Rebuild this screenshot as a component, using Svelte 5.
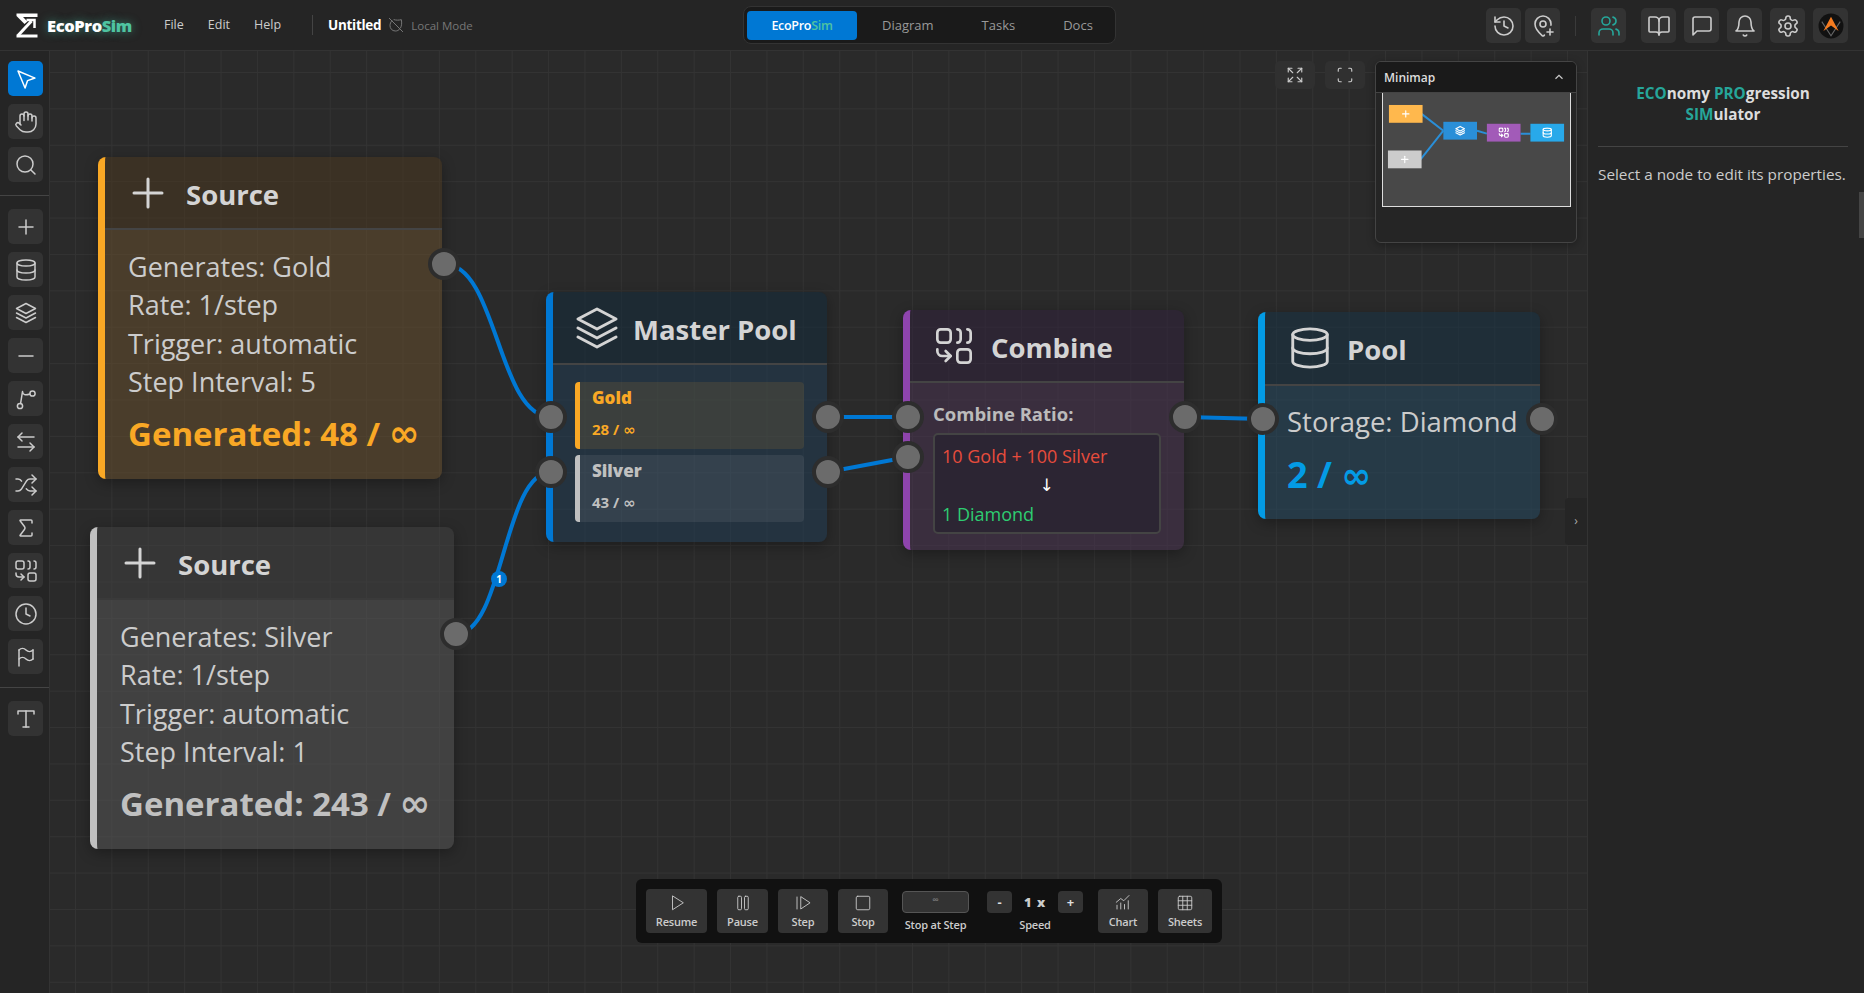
<script>
  // lucide-ish icon bodies, drawn on a 24 box
  const icons = {
    pointer: '<path d="m4 4 7.07 17 2.51-7.39L21 11.07z"/>',
    hand: '<path d="M18 11V6a2 2 0 0 0-4 0"/><path d="M14 10V4a2 2 0 0 0-4 0v2"/><path d="M10 10.5V6a2 2 0 0 0-4 0v8"/><path d="M18 8a2 2 0 1 1 4 0v6a8 8 0 0 1-8 8h-2c-2.8 0-4.5-.86-5.99-2.34l-3.6-3.6a2 2 0 0 1 2.83-2.82L7 15"/>',
    search: '<circle cx="11" cy="11" r="8"/><path d="m21 21-4.3-4.3"/>',
    plus: '<path d="M5 12h14"/><path d="M12 5v14"/>',
    database: '<ellipse cx="12" cy="5" rx="9" ry="3"/><path d="M3 5v14a9 3 0 0 0 18 0V5"/><path d="M3 12a9 3 0 0 0 18 0"/>',
    layers: '<path d="M12 2.5 2.5 7.5l9.5 5 9.5-5z"/><path d="m2.5 12 9.5 5 9.5-5"/><path d="m2.5 16.5 9.5 5 9.5-5"/>',
    minus: '<path d="M5 12h14"/>',
    branch: '<circle cx="6" cy="19" r="2.6"/><circle cx="18.5" cy="6.5" r="2.6"/><path d="M6.6 16.4 8.5 4.5q.5 5 7.4 2.5"/>',
    swap: '<path d="M8 3 4 7l4 4"/><path d="M4 7h16"/><path d="m16 21 4-4-4-4"/><path d="M20 17H4"/>',
    shuffle: '<path d="m18 14 4 4-4 4"/><path d="m18 2 4 4-4 4"/><path d="M2 18h1.973a4 4 0 0 0 3.3-1.7l5.454-8.6a4 4 0 0 1 3.3-1.7H22"/><path d="M2 6h1.972a4 4 0 0 1 3.6 2.2"/><path d="M22 18h-6.041a4 4 0 0 1-3.3-1.8l-.359-.45"/>',
    sigma: '<path d="M18 7V5a1 1 0 0 0-1-1H6.5a.5.5 0 0 0-.4.8l4.5 6a2 2 0 0 1 0 2.4l-4.5 6a.5.5 0 0 0 .4.8H17a1 1 0 0 0 1-1v-2"/>',
    combine: '<path d="M10 18H5a3 3 0 0 1-3-3v-1"/><path d="M14 2a2 2 0 0 1 2 2v4a2 2 0 0 1-2 2"/><path d="M20 2a2 2 0 0 1 2 2v4a2 2 0 0 1-2 2"/><path d="m7 21 3-3-3-3"/><rect x="14" y="14" width="8" height="8" rx="2"/><rect x="2" y="2" width="8" height="8" rx="2"/>',
    clock: '<circle cx="12" cy="12" r="10"/><path d="M12 6v6l4 2"/>',
    flag: '<path d="M5 5v16"/><path d="M19 5v9"/><path d="M5 5a5 5 0 0 1 7 0 5 5 0 0 0 7 0"/><path d="M5 14a5 5 0 0 1 7 0 5 5 0 0 0 7 0"/>',
    type: '<path d="M4 7V4h16v3"/><path d="M9 20h6"/><path d="M12 4v16"/>',
    history: '<path d="M3 12a9 9 0 1 0 9-9 9.75 9.75 0 0 0-6.74 2.74L3 8"/><path d="M3 3v5h5"/><path d="M12 7v5l4 2"/>',
    pinPlus: '<path d="M19.914 11.105A7.298 7.298 0 0 0 20 10a8 8 0 0 0-16 0c0 4.993 5.539 10.193 7.399 11.799a1 1 0 0 0 1.202 0 32 32 0 0 0 .824-.738"/><circle cx="12" cy="10" r="3"/><path d="M16 18h6"/><path d="M19 15v6"/>',
    users: '<path d="M16 21v-2a4 4 0 0 0-4-4H6a4 4 0 0 0-4 4v2"/><circle cx="9" cy="7" r="4"/><path d="M22 21v-2a4 4 0 0 0-3-3.87"/><path d="M16 3.13a4 4 0 0 1 0 7.75"/>',
    book: '<path d="M12 7v14"/><path d="M3 18a1 1 0 0 1-1-1V4a1 1 0 0 1 1-1h5a4 4 0 0 1 4 4 4 4 0 0 1 4-4h5a1 1 0 0 1 1 1v13a1 1 0 0 1-1 1h-6a3 3 0 0 0-3 3 3 3 0 0 0-3-3z"/>',
    message: '<path d="M21 15a2 2 0 0 1-2 2H7l-4 4V5a2 2 0 0 1 2-2h14a2 2 0 0 1 2 2z"/>',
    bell: '<path d="M6 8a6 6 0 0 1 12 0c0 7 3 9 3 9H3s3-2 3-9"/><path d="M10.3 21a1.94 1.94 0 0 0 3.4 0"/>',
    gear: '<path d="M12.22 2h-.44a2 2 0 0 0-2 2v.18a2 2 0 0 1-1 1.73l-.43.25a2 2 0 0 1-2 0l-.15-.08a2 2 0 0 0-2.73.73l-.22.38a2 2 0 0 0 .73 2.73l.15.1a2 2 0 0 1 1 1.72v.51a2 2 0 0 1-1 1.74l-.15.09a2 2 0 0 0-.73 2.73l.22.38a2 2 0 0 0 2.73.73l.15-.08a2 2 0 0 1 2 0l.43.25a2 2 0 0 1 1 1.73V20a2 2 0 0 0 2 2h.44a2 2 0 0 0 2-2v-.18a2 2 0 0 1 1-1.73l.43-.25a2 2 0 0 1 2 0l.15.08a2 2 0 0 0 2.73-.73l.22-.39a2 2 0 0 0-.73-2.73l-.15-.08a2 2 0 0 1-1-1.74v-.5a2 2 0 0 1 1-1.74l.15-.09a2 2 0 0 0 .73-2.73l-.22-.38a2 2 0 0 0-2.73-.73l-.15.08a2 2 0 0 1-2 0l-.43-.25a2 2 0 0 1-1-1.73V4a2 2 0 0 0-2-2z"/><circle cx="12" cy="12" r="3"/>',
    leafOff: '<path d="m2 2 20 20"/><path d="M5.8 5.8C4 7.5 3 10 3 13c0 4 3 8 8 8 3 0 5-1 6.5-3"/><path d="M9 4c3 1 7 1 11 0 1 5 .5 9-1 12"/>',
    expand: '<path d="m15 15 6 6"/><path d="m15 9 6-6"/><path d="M21 16v5h-5"/><path d="M21 8V3h-5"/><path d="M3 16v5h5"/><path d="m3 21 6-6"/><path d="M3 8V3h5"/><path d="M9 9 3 3"/>',
    full: '<path d="M3 7V5a2 2 0 0 1 2-2h2"/><path d="M17 3h2a2 2 0 0 1 2 2v2"/><path d="M21 17v2a2 2 0 0 1-2 2h-2"/><path d="M7 21H5a2 2 0 0 1-2-2v-2"/>',
    play: '<path d="M6 3v18l14-9z"/>',
    pause: '<rect x="5" y="3" width="5" height="18" rx="1.5"/><rect x="14" y="3" width="5" height="18" rx="1.5"/>',
    step: '<path d="M4 4v16"/><path d="M9 4v16l12-8z"/>',
    stop: '<rect x="3" y="3" width="18" height="18" rx="2"/>',
    chart: '<path d="M4 20v-5"/><path d="M9 20v-8"/><path d="M14 20v-6"/><path d="M19 20V9"/><path d="m3 11 6-5 4 3 7-7"/>',
    sheet: '<rect x="3" y="3" width="18" height="18" rx="2"/><path d="M3 9h18"/><path d="M3 15h18"/><path d="M9 3v18"/><path d="M15 3v18"/>'
  };

  const menus = ["File", "Edit", "Help"];
  const tabs = ["Diagram", "Tasks", "Docs"];
  const toolGroups = [
    [{ i: "pointer", on: true }, { i: "hand" }, { i: "search" }],
    [{ i: "plus" }, { i: "database" }, { i: "layers" }, { i: "minus" }, { i: "branch" }, { i: "swap" }, { i: "shuffle" }, { i: "sigma" }, { i: "combine" }, { i: "clock" }, { i: "flag" }],
    [{ i: "type" }]
  ];

  const sources = [
    { cls: "gold", x: 48, y: 106, w: 344, h: 322, res: "Gold", interval: 5, made: "48" },
    { cls: "silver", x: 40, y: 476, w: 364, h: 322, res: "Silver", interval: 1, made: "243" }
  ];

  const stock = [
    { name: "Gold", val: "28", cls: "gold" },
    { name: "Silver", val: "43", cls: "silver" }
  ];

  const runBtns = [
    { i: "play", t: "Resume", w: 61 },
    { i: "pause", t: "Pause", w: 51 },
    { i: "step", t: "Step", w: 50 },
    { i: "stop", t: "Stop", w: 50 }
  ];

  const mini = [
    { x: 6, y: 12, c: "#ffb84d", i: "plus" },
    { x: 61, y: 29, c: "#2a8fd8", i: "layers" },
    { x: 105, y: 31, c: "#a25bb8", i: "combine" },
    { x: 149, y: 31, c: "#28a9ea", i: "database" },
    { x: 5, y: 58, c: "#cccccc", i: "plus" }
  ];
</script>

{#snippet icon(name, size = 24, sw = 2)}
  <svg width={size} height={size} viewBox="0 0 24 24" fill="none" stroke="currentColor" stroke-width={sw} stroke-linecap="round" stroke-linejoin="round">{@html icons[name]}</svg>
{/snippet}

<div class="app">
  <header class="top">
    <div class="brand">
      <svg width="22" height="25" viewBox="0 0 22 25" fill="none">
        <path d="M0.5 0.5H21.5V4H7L11.5 8.5L8.5 11L0.5 3Z" fill="#fff"/>
        <path d="M2 22.5 15.5 8" stroke="#fff" stroke-width="3"/>
        <path d="M10.5 7H18.5V15" stroke="#fff" stroke-width="2.5"/>
        <path d="M0.5 24.5V21.5H21.5V24.5Z" fill="#fff"/>
      </svg>
      <span class="brand-name">EcoPro<em>Sim</em></span>
    </div>
    <nav class="menus">
      {#each menus as m}<span>{m}</span>{/each}
    </nav>
    <div class="doc">
      <b>Untitled</b>
      {@render icon("leafOff", 16, 1.5)}
      <span>Local Mode</span>
    </div>
    <div class="tabs">
      <span class="tab active">EcoPro<em>Sim</em></span>
      {#each tabs as t}<span class="tab">{t}</span>{/each}
    </div>
    <div class="actions">
      <button class="ic">{@render icon("history", 24, 1.6)}</button>
      <button class="ic">{@render icon("pinPlus", 24, 1.6)}</button>
      <i class="sep"></i>
      <button class="ic teal">{@render icon("users", 24, 1.6)}</button>
      <i class="sep-space"></i>
      <button class="ic">{@render icon("book", 24, 1.6)}</button>
      <button class="ic">{@render icon("message", 24, 1.6)}</button>
      <button class="ic">{@render icon("bell", 24, 1.6)}</button>
      <button class="ic">{@render icon("gear", 24, 1.6)}</button>
      <button class="ic">
        <svg width="26" height="26" viewBox="0 0 24 24">
          <circle cx="12" cy="12" r="11.5" fill="#111"/>
          <path d="M3.5 8 12 21 20.5 8" fill="none" stroke="#666" stroke-width="1"/>
          <path d="M12 3.5 19 16.5 12 11.5 5 16.5Z" fill="#f47b20"/>
        </svg>
      </button>
    </div>
  </header>

  <aside class="tools">
    {#each toolGroups as group}
      <div class="tool-group">
        {#each group as t}
          <button class="ic" class:on={t.on}>{@render icon(t.i, 24, 1.5)}</button>
        {/each}
      </div>
    {/each}
  </aside>

  <main class="canvas">
    <svg class="edges" width="1537" height="942" fill="none" stroke="#0078d4" stroke-width="4">
      <path d="M394 213C447.5 213 447.5 366 501 366"/>
      <path d="M406 583C453.5 583 453.5 421 501 421"/>
      <path d="M778 366L858 366"/>
      <path d="M778 421L858 406"/>
      <path d="M1135 366L1213 368"/>
    </svg>
    <span class="edge-label">1</span>

    {#each sources as s}
      <section class="node {s.cls}" style="left:{s.x}px;top:{s.y}px;width:{s.w}px;height:{s.h}px">
        <div class="head src-head">
          <span class="head-icon">{@render icon("plus", 48, 1.5)}</span>
          <h3>Source</h3>
        </div>
        <div class="body src-body">
          <p>Generates: {s.res}</p>
          <p>Rate: 1/step</p>
          <p>Trigger: automatic</p>
          <p>Step Interval: {s.interval}</p>
          <p class="made">Generated: {s.made} / <span class="inf">∞</span></p>
        </div>
        <i class="handle" style="left:{s.w - 21}px;top:91px"></i>
      </section>
    {/each}

    <section class="node master" style="left:496px;top:241px;width:281px;height:250px">
      <div class="head">
        <span class="head-icon">{@render icon("layers", 48, 1.5)}</span>
        <h3>Master Pool</h3>
      </div>
      <div class="body stock-list">
        {#each stock as s}
          <div class="stock {s.cls}">
            <b>{s.name}</b>
            <span>{s.val} / <span class="inf">∞</span></span>
          </div>
        {/each}
      </div>
      <i class="handle" style="left:-18px;top:109px"></i>
      <i class="handle" style="left:-18px;top:164px"></i>
      <i class="handle" style="left:259px;top:109px"></i>
      <i class="handle" style="left:259px;top:164px"></i>
    </section>

    <section class="node combine" style="left:853px;top:259px;width:281px;height:240px">
      <div class="head">
        <span class="head-icon">{@render icon("combine", 40, 1.6)}</span>
        <h3>Combine</h3>
      </div>
      <div class="body">
        <b class="ratio-title">Combine Ratio:</b>
        <div class="ratio">
          <span class="in">10 Gold + 100 Silver</span>
          <span class="arrow">↓</span>
          <span class="out">1 Diamond</span>
        </div>
      </div>
      <i class="handle" style="left:-18px;top:91px"></i>
      <i class="handle" style="left:-18px;top:131px"></i>
      <i class="handle" style="left:259px;top:91px"></i>
    </section>

    <section class="node pool" style="left:1208px;top:261px;width:282px;height:207px">
      <div class="head">
        <span class="head-icon">{@render icon("database", 46, 1.5)}</span>
        <h3>Pool</h3>
      </div>
      <div class="body pool-body">
        <p>Storage: Diamond</p>
        <p class="level">2 / <span class="inf">∞</span></p>
      </div>
      <i class="handle" style="left:-18px;top:91px"></i>
      <i class="handle" style="left:261px;top:91px"></i>
    </section>

    <div class="view-btns">
      <button class="ic dim">{@render icon("expand", 18, 1.5)}</button>
      <button class="ic dim">{@render icon("full", 18, 1.5)}</button>
    </div>

    <div class="minimap">
      <div class="mini-head">
        <span>Minimap</span>
        <svg width="14" height="14" viewBox="0 0 24 24" fill="none" stroke="#ccc" stroke-width="2"><path d="m6 15 6-6 6 6"/></svg>
      </div>
      <svg class="mini-map" width="189" height="114" viewBox="0 0 189 114">
        <g stroke="#2a8fd8" stroke-width="2" fill="none">
          <path d="M39 21 61 38"/>
          <path d="M38 67 61 38"/>
          <path d="M95 38 105 41"/>
          <path d="M139 41H149"/>
        </g>
        {#each mini as m}
          <rect x={m.x} y={m.y} width="34" height="18" fill={m.c}/>
          <svg x={m.x + 11.5} y={m.y + 3.5} width="11" height="11" viewBox="0 0 24 24" fill="none" stroke="#fff" stroke-width="2.5" stroke-linecap="round" stroke-linejoin="round">{@html icons[m.i]}</svg>
        {/each}
      </svg>
    </div>

    <div class="run-bar">
      {#each runBtns as b}
        <button class="run" style="width:{b.w}px">{@render icon(b.i, 18, 1.2)}<span>{b.t}</span></button>
      {/each}
      <div class="field">
        <div class="step-input">∞</div>
        <span>Stop at Step</span>
      </div>
      <div class="field speed">
        <div class="speed-row">
          <button class="mini-btn">-</button>
          <b>1 x</b>
          <button class="mini-btn">+</button>
        </div>
        <span>Speed</span>
      </div>
      <button class="run" style="width:50px">{@render icon("chart", 18, 1.2)}<span>Chart</span></button>
      <button class="run" style="width:54px">{@render icon("sheet", 18, 1.2)}<span>Sheets</span></button>
    </div>
  </main>

  <aside class="side">
    <span class="side-tab">›</span>
    <h4><em>ECO</em>nomy <em>PRO</em>gression <em>SIM</em>ulator</h4>
    <hr />
    <p>Select a node to edit its properties.</p>
    <i class="scroll-thumb"></i>
  </aside>
</div>

<style>
  :global(body) {
    background: #2a2a2a;
    overflow: hidden;
  }
  .app {
    display: grid;
    grid-template-columns: 50px 1fr 277px;
    grid-template-rows: 51px 1fr;
    width: 1864px;
    height: 993px;
    font-family: "Open Sans", "DejaVu Sans", sans-serif;
    color: #ddd;
  }
  em {
    font-style: normal;
  }
  button {
    font-family: inherit;
    border: none;
    padding: 0;
    color: inherit;
  }
  h3,
  h4,
  p {
    margin: 0;
  }
  .inf {
    font-family: "DejaVu Sans", sans-serif;
    line-height: 0;
  }
  .ic {
    display: flex;
    align-items: center;
    justify-content: center;
    width: 35px;
    height: 35px;
    border-radius: 5px;
    background: #333;
    color: #ccc;
  }
  .ic.on {
    background: #0078d4;
    color: #fff;
  }
  .ic.teal {
    color: #26a69a;
  }

  .top {
    grid-column: 1 / -1;
    display: flex;
    align-items: center;
    position: relative;
    background: #252525;
    border-bottom: 1px solid #333;
    box-sizing: border-box;
    padding-left: 16px;
  }
  .brand {
    display: flex;
    align-items: center;
    gap: 9px;
    width: 148px;
  }
  .brand-name {
    font-size: 16.5px;
    font-weight: 800;
    letter-spacing: -0.4px;
    color: #fff;
    text-shadow: 0 0 10px rgba(80, 220, 190, 0.5);
  }
  .brand-name em,
  .tab em {
    color: #4fc3a1;
  }
  .menus {
    display: flex;
    gap: 24px;
    font-size: 12.5px;
    color: #ccc;
    padding-right: 31px;
    border-right: 1px solid #444;
    height: 20px;
    line-height: 20px;
  }
  .doc {
    display: flex;
    align-items: center;
    margin-left: 15px;
    gap: 7px;
    font-size: 11.5px;
    color: #777;
  }
  .doc b {
    font-size: 13.5px;
    font-weight: 700;
    color: #fff;
    letter-spacing: -0.3px;
  }
  .tabs {
    position: absolute;
    left: 743px;
    top: 6px;
    box-sizing: border-box;
    display: flex;
    align-items: center;
    width: 373px;
    height: 38px;
    padding: 0 3px;
    background: #1a1a1a;
    border: 1px solid #333;
    border-radius: 8px;
    font-size: 13px;
    color: #999;
  }
  .tab {
    flex: none;
    padding: 0 24px;
  }
  .tab.active {
    box-sizing: border-box;
    width: 110px;
    height: 29px;
    margin-right: 1px;
    padding: 0;
    line-height: 29px;
    text-align: center;
    border-radius: 4px;
    background: #0078d4;
    color: #fff;
    font-size: 12.5px;
    font-weight: 600;
    letter-spacing: -0.3px;
  }
  .actions {
    position: absolute;
    right: 16px;
    top: 8px;
    display: flex;
    align-items: center;
    gap: 8px;
  }
  .actions .ic:nth-child(2) {
    margin-left: -4px;
  }
  .sep {
    width: 1px;
    height: 20px;
    margin: 0 7px;
    background: #3a3a3a;
  }
  .sep-space {
    margin-left: -1px;
  }

  .tools {
    background: #252525;
    border-right: 1px solid #333;
    box-sizing: border-box;
    display: flex;
    flex-direction: column;
  }
  .tool-group {
    display: flex;
    flex-direction: column;
    gap: 8px;
    padding: 10px 8px 13px;
    border-bottom: 1px solid #444;
  }
  .tool-group:last-child {
    border-bottom: none;
  }
  .tool-group + .tool-group {
    padding-top: 13px;
  }

  .canvas {
    position: relative;
    overflow: hidden;
    background-color: #2a2a2a;
    background-image: linear-gradient(#333 1px, transparent 1px),
      linear-gradient(90deg, #333 1px, transparent 1px);
    background-size: 36.4px 36.4px;
    background-position: 25px 21px;
  }
  .edges {
    position: absolute;
    left: 0;
    top: 0;
  }
  .edge-label {
    position: absolute;
    left: 441px;
    top: 520px;
    z-index: 3;
    width: 16px;
    height: 16px;
    border-radius: 50%;
    background: #0078d4;
    color: #fff;
    font-size: 10px;
    font-weight: 700;
    line-height: 16px;
    text-align: center;
  }

  .node {
    position: absolute;
    display: flex;
    flex-direction: column;
    box-sizing: border-box;
    border-left: 7px solid;
    border-radius: 8px;
    box-shadow: 0 4px 14px rgba(0, 0, 0, 0.3);
  }
  .head {
    display: flex;
    align-items: center;
    flex: none;
    height: 73px;
    box-sizing: border-box;
    border-radius: 0 8px 0 0;
    border-bottom: 2px solid #444;
  }
  .head h3 {
    padding-top: 3px;
    font-size: 27.5px;
    font-weight: 700;
    color: #d4d4d4;
  }
  .head-icon {
    display: flex;
    color: #d4d4d4;
  }
  .body {
    flex: 1;
    border-radius: 0 0 8px 0;
  }
  .handle {
    position: absolute;
    z-index: 2;
    box-sizing: border-box;
    width: 32px;
    height: 32px;
    border-radius: 50%;
    background: #6b6b6b;
    border: 4px solid #2d2d2d;
  }

  .node.gold {
    border-color: #f9a825;
  }
  .node.gold .head {
    background: rgba(76, 56, 30, 0.5);
  }
  .node.gold .body {
    background: rgba(106, 80, 44, 0.5);
  }
  .node.silver {
    border-color: #c0c0c0;
  }
  .node.silver .head {
    background: rgba(66, 66, 66, 0.5);
    border-bottom-color: #3a3a3a;
  }
  .node.silver .body {
    background: rgba(88, 88, 88, 0.5);
  }
  .src-head {
    padding-left: 19px;
    gap: 14px;
  }
  .src-body {
    padding: 18px 0 0 23px;
    font-size: 27px;
    line-height: 38.3px;
    color: #ccc;
  }
  .made {
    margin-top: 11px;
    font-size: 33px;
    line-height: 44px;
    font-weight: 700;
  }
  .made .inf {
    font-size: 1.12em;
  }
  .gold .made {
    color: #f9a825;
  }
  .silver .made {
    color: #c0c0c0;
  }

  .node.master {
    border-color: #0078d4;
  }
  .master .head {
    background: rgba(16, 42, 60, 0.5);
    padding-left: 20px;
    gap: 12px;
  }
  .stock-list {
    background: rgba(30, 60, 86, 0.5);
    padding: 17px 23px 0 22px;
    display: flex;
    flex-direction: column;
    gap: 6px;
  }
  .stock {
    display: flex;
    flex-direction: column;
    justify-content: space-between;
    box-sizing: border-box;
    height: 67px;
    padding: 4px 0 10px 12px;
    border-left: 5px solid;
    border-radius: 4px;
    font-weight: 700;
  }
  .stock b {
    font-size: 17px;
  }
  .stock span {
    font-size: 15px;
  }
  .stock.gold {
    background: rgba(249, 168, 37, 0.11);
    border-color: #f9a825;
    color: #f9a825;
  }
  .stock.silver {
    background: rgba(192, 192, 192, 0.1);
    border-color: #c0c0c0;
    color: #c0c0c0;
  }

  .node.combine {
    border-color: #8e44ad;
  }
  .combine .head {
    background: rgba(48, 32, 60, 0.5);
    padding-left: 24px;
    gap: 17px;
  }
  .combine .body {
    background: rgba(74, 50, 82, 0.5);
    padding: 19px 23px 0 23px;
  }
  .ratio-title {
    display: block;
    font-size: 18.5px;
    line-height: 24px;
    color: #bbb;
  }
  .ratio {
    display: flex;
    flex-direction: column;
    box-sizing: border-box;
    height: 101px;
    margin-top: 7px;
    padding: 9px 8px 6px 7px;
    justify-content: space-between;
    background: #2c2533;
    border: 2px solid #444;
    border-radius: 5px;
    font-size: 18px;
  }
  .in {
    color: #e74c3c;
  }
  .out {
    color: #2ecc71;
  }
  .arrow {
    text-align: center;
    color: #fff;
    font-size: 17px;
    line-height: 18px;
  }

  .node.pool {
    border-color: #039be5;
  }
  .pool .head {
    background: rgba(20, 50, 70, 0.5);
    padding-left: 22px;
    gap: 14px;
    height: 74px;
  }
  .pool-body {
    background: rgba(34, 74, 100, 0.5);
    padding: 17px 0 0 22px;
    font-size: 27.5px;
    color: #ccc;
  }
  .level {
    margin-top: 10px;
    font-size: 36px;
    font-weight: 700;
    color: #039be5;
  }

  .view-btns {
    position: absolute;
    left: 1225px;
    top: 10px;
    display: flex;
    gap: 10px;
  }
  .ic.dim {
    width: 40px;
    height: 28px;
    background: #303030;
  }
  .minimap {
    position: absolute;
    left: 1325px;
    top: 10px;
    box-sizing: border-box;
    width: 202px;
    height: 182px;
    background: #252525;
    border: 1px solid #444;
    border-radius: 6px;
    overflow: hidden;
    box-shadow: 0 2px 8px rgba(0, 0, 0, 0.3);
  }
  .mini-head {
    display: flex;
    align-items: center;
    justify-content: space-between;
    height: 30px;
    padding: 0 10px 0 8px;
    background: #1a1a1a;
    border-bottom: 1px solid #444;
    font-size: 12px;
    font-weight: 600;
  }
  .mini-map {
    display: block;
    margin-left: 6px;
    background: #484848;
    border: solid #ddd;
    border-width: 0 1px 1px;
    box-sizing: border-box;
  }

  .run-bar {
    position: absolute;
    left: 586px;
    top: 828px;
    box-sizing: border-box;
    display: flex;
    align-items: flex-start;
    width: 586px;
    height: 64px;
    padding: 10px;
    gap: 10px;
    background: #111;
    border-radius: 6px;
  }
  .run {
    flex: none;
    display: flex;
    flex-direction: column;
    align-items: center;
    justify-content: center;
    gap: 2px;
    height: 44px;
    border-radius: 4px;
    background: #333;
    color: #ccc;
    font-size: 11px;
    font-weight: 600;
    letter-spacing: -0.2px;
  }
  .field {
    flex: none;
    display: flex;
    flex-direction: column;
    align-items: center;
    gap: 4px;
    width: 67px;
    margin: 2px 4px 0;
    font-size: 11px;
    font-weight: 600;
    letter-spacing: -0.2px;
    white-space: nowrap;
    color: #ccc;
  }
  .step-input {
    box-sizing: border-box;
    width: 67px;
    height: 22px;
    background: #333;
    border: 1px solid #555;
    border-radius: 4px;
    font-size: 9px;
    line-height: 16px;
    text-align: center;
    color: #777;
  }
  .field.speed {
    width: 96px;
    margin: 2px 5px 0 4px;
  }
  .speed-row {
    display: flex;
    align-items: center;
    justify-content: space-between;
    width: 96px;
  }
  .speed-row b {
    font-size: 13px;
    letter-spacing: 1px;
  }
  .mini-btn {
    width: 25px;
    height: 22px;
    border-radius: 4px;
    background: #333;
    color: #ddd;
    font-size: 13px;
    font-weight: 700;
  }

  .side {
    position: relative;
    background: #252525;
    border-left: 1px solid #333;
    box-sizing: border-box;
    padding: 32px 16px 0 10px;
  }
  .side h4 {
    font-size: 15.3px;
    line-height: 21px;
    font-weight: 700;
    text-align: center;
    width: 250px;
    padding: 0 20px;
    box-sizing: border-box;
    color: #ddd;
  }
  .side h4 em {
    color: #26a69a;
  }
  .side hr {
    width: 250px;
    margin: 21px 0 16px;
    border: none;
    border-top: 1px solid #444;
  }
  .side p {
    font-size: 15.3px;
    line-height: 22px;
    white-space: nowrap;
    color: #ccc;
  }
  .side-tab {
    position: absolute;
    left: -23px;
    top: 447px;
    width: 22px;
    height: 47px;
    background: #252525;
    border-radius: 4px 0 0 4px;
    font-size: 12px;
    line-height: 45px;
    text-align: center;
    color: #aaa;
  }
  .scroll-thumb {
    position: absolute;
    right: 0;
    top: 141px;
    width: 5px;
    height: 46px;
    background: #444;
  }
</style>
